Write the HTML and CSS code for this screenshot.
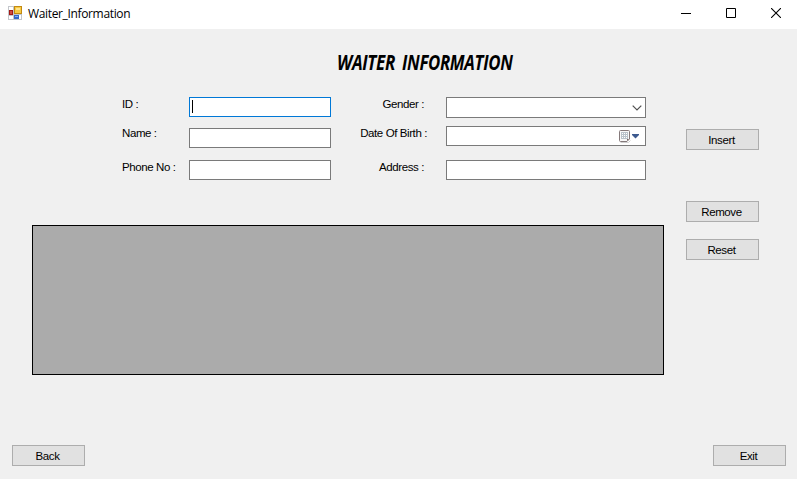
FILE: index.html
```html
<!DOCTYPE html>
<html lang="en">
<head>
<meta charset="utf-8">
<title>Waiter_Information</title>
<link rel="stylesheet" href="styles.css">
</head>
<body>
<header class="titlebar">
  <svg class="app-icon" width="14" height="14" viewBox="0 0 14 14" shape-rendering="crispEdges">
    <path d="M0 0h14v14H0z" fill="#c3c6cb"/>
    <path d="M1 1h4v3H1zM1 10h4v3H1zM6 9h7v4H6z" fill="#fff"/>
    <path d="M1 4h4v5H1z" fill="#a21a16"/><path d="M2 5h2v3H2z" fill="#d0493f"/>
    <path d="M6 0h8v8H6z" fill="#c28a12"/><path d="M7 1h6v6H7z" fill="#f7c942"/><path d="M8 2h4v2H8z" fill="#ffe58c"/>
    <path d="M6 9h5v4H6z" fill="#3468c8"/><path d="M7 10h3v1H7z" fill="#82adf5"/>
  </svg>
  <span class="caption">Waiter_Information</span>
  <div class="controls">
    <svg width="10" height="10" viewBox="0 0 10 10"><path d="M0 5.5h10" stroke="#000"/></svg>
    <svg width="10" height="10" viewBox="0 0 10 10"><path d="M.5.5h9v9h-9z" fill="none" stroke="#000"/></svg>
    <svg width="10" height="10" viewBox="0 0 10 10"><path d="M0 0l10 10M10 0L0 10" stroke="#000" stroke-width="1.1"/></svg>
  </div>
</header>
<main class="window">
  <h1 class="heading"><span class="word waiter">WAITER</span><span class="word info">INFORMATION</span></h1>
  <div class="content">
    <div class="left">
      <form class="form">
        <div class="labels">
          <label>ID :</label><label class="second">Name :</label><label class="third">Phone No :</label>
        </div>
        <div class="fields main-fields">
          <div class="field focused"><span class="caret"></span></div>
          <div class="field name"></div>
          <div class="field phone"></div>
        </div>
        <div class="labels right-labels">
          <label>Gender :</label><label class="second date-label">Date Of Birth :</label><label class="third">Address :</label>
        </div>
        <div class="fields detail-fields">
          <div class="field select"><svg width="10" height="6" viewBox="0 0 10 6"><path d="M.7.7L5 5 9.3.7" fill="none" stroke="#505050" stroke-width="1.2"/></svg></div>
          <div class="field date">
            <svg width="21" height="13" viewBox="0 0 21 13">
              <path d="M1.500 12.500h8l2-2" fill="none" stroke="#d0d0d0"/>
              <path d="M1.500.5h8q1 0 1 1v7.500l-2.500 2.500H1.500q-1 0-1-1v-9q0-1 1-1z" fill="#f8f8f8" stroke="#85797a"/>
              <path d="M2 2h7v7H2z" fill="#b9c2ca"/>
              <path d="M3 3h1v1H3zM5 3h1v1H5zM7 3h1v1H7zM3 5h1v1H3zM5 5h1v1H5zM7 5h1v1H7zM3 7h1v1H3zM5 7h1v1H5zM7 7h1v1H7z" fill="#fff"/>
              <path d="M8 11V9h2z" fill="#776765"/>
              <path d="M13 4h7v1l-3.500 3.500L13 5z" fill="#3d5a8f"/>
            </svg>
          </div>
          <div class="field address"></div>
        </div>
      </form>
      <div class="data-grid"></div>
    </div>
    <div class="actions">
      <button>Insert</button><button class="remove">Remove</button><button class="reset">Reset</button>
    </div>
  </div>
  <footer class="footer"><button>Back</button><button>Exit</button></footer>
</main>
</body>
</html>
```
FILE: styles.css
```css
* { box-sizing: border-box; }
body {
  margin: 0;
  height: 479px;
  overflow: hidden;
  background: #f0f0f0;
  color: #000;
  font: 11.5px/14px "Liberation Sans", Arial, sans-serif;
  letter-spacing: -.4px;
}
svg { display: block; }
.titlebar {
  display: flex;
  height: 29px;
  padding: 6px 16px 0 8px;
  background: #fff;
}
.caption {
  margin-left: 6px;
  font: 12px/16px "Open Sans", sans-serif;
  letter-spacing: -.35px;
}
.controls { display: flex; gap: 35px; margin: 2px 0 0 auto; }
.window {
  display: flex;
  flex-direction: column;
  height: 450px;
  padding: 22px 11px 13px 12px;
}
.heading {
  display: flex;
  gap: 7px;
  height: 24px;
  margin: 0 0 0 325px;
  font: italic 700 21px/23px "Open Sans", sans-serif;
  letter-spacing: -.4px;
}
.word { transform-origin: 0 50%; white-space: nowrap; }
.waiter { width: 58px; transform: scaleX(.81); }
.info { width: 111px; transform: scaleX(.8); }
.content { display: flex; padding: 22px 0 0 20px; }
.left { width: 632px; }
.form { display: flex; height: 128px; padding-left: 90px; }
.labels {
  display: flex;
  flex-direction: column;
  width: 67px;
  white-space: nowrap;
}
.second { margin-top: 15px; }
.third { margin-top: 20px; }
.fields { display: flex; flex-direction: column; }
.main-fields { width: 142px; }
.right-labels { width: 93px; margin-right: 22px; align-items: flex-end; }
.date-label { margin-right: -3px; }
.detail-fields { width: 200px; }
.field {
  display: flex;
  height: 20px;
  border: 1px solid #7a7a7a;
  background: #fff;
}
.focused { border-color: #0078d7; }
.caret { width: 1px; height: 13px; margin: 2px; background: #000; }
.name { margin-top: 11px; }
.phone { margin-top: 12px; }
.select { height: 21px; justify-content: flex-end; padding: 7px 3px 0 0; }
.date { margin-top: 8px; justify-content: flex-end; padding: 3px 5px 0 0; }
.address { margin-top: 14px; }
.data-grid { height: 150px; border: 1px solid #000; background: #ababab; }
.actions { display: flex; flex-direction: column; margin-left: 22px; padding-top: 32px; }
button {
  width: 73px;
  height: 21px;
  padding: 0 2px 0 0;
  border: 1px solid #adadad;
  background: #e1e1e1;
  color: #000;
  font: inherit;
  letter-spacing: inherit;
}
.remove { margin-top: 51px; }
.reset { margin-top: 17px; }
.footer { display: flex; justify-content: space-between; margin-top: auto; }
```
